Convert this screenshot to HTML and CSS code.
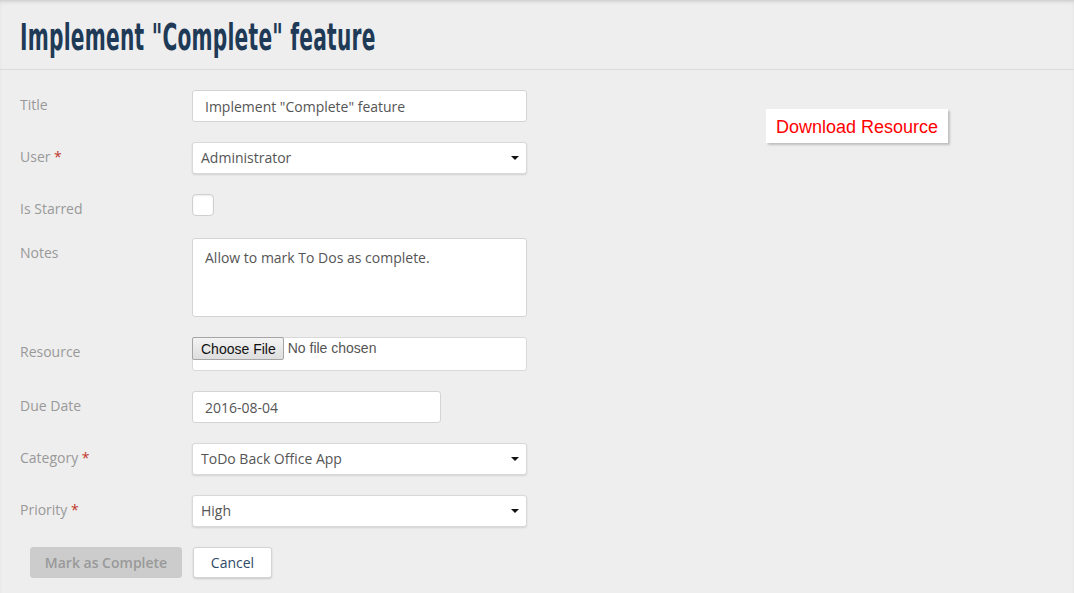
FILE: index.html
```html
<!DOCTYPE html>
<html lang="en">
<head>
<meta charset="utf-8">
<title>Implement "Complete" feature</title>
<link rel="stylesheet" href="styles.css">
</head>
<body>
<header class="header">
  <h1 class="title">Implement "Complete" feature</h1>
</header>
<main class="main">
  <form class="form">
    <div class="row">
      <label class="label">Title</label>
      <div class="input">Implement "Complete" feature</div>
    </div>
    <div class="row">
      <label class="label">User <span class="req">*</span></label>
      <div class="select"><span>Administrator</span><span class="caret"></span></div>
    </div>
    <div class="row">
      <label class="label">Is Starred</label>
      <div class="checkbox"></div>
    </div>
    <div class="row">
      <label class="label">Notes</label>
      <div class="textarea">Allow to mark To Dos as complete.</div>
    </div>
    <div class="row">
      <label class="label">Resource</label>
      <div class="file"><span class="file-btn">Choose File</span><span class="file-name">No file chosen</span></div>
    </div>
    <div class="row">
      <label class="label">Due Date</label>
      <div class="input input-date">2016-08-04</div>
    </div>
    <div class="row">
      <label class="label">Category <span class="req">*</span></label>
      <div class="select"><span>ToDo Back Office App</span><span class="caret"></span></div>
    </div>
    <div class="row">
      <label class="label">Priority <span class="req">*</span></label>
      <div class="select"><span>High</span><span class="caret"></span></div>
    </div>
    <div class="actions">
      <button type="button" class="btn btn-disabled">Mark as Complete</button>
      <button type="button" class="btn btn-cancel">Cancel</button>
    </div>
  </form>
  <aside class="aside">
    <a class="download">Download Resource</a>
  </aside>
</main>
</body>
</html>
```

FILE: styles.css
```css
* { box-sizing: border-box; }

html, body {
  margin: 0;
  padding: 0;
}

body {
  background: #eeeeee;
  font-family: "Open Sans", "Liberation Sans", sans-serif;
  font-size: 14px;
  color: #555;
  width: 1074px;
  height: 593px;
  overflow: hidden;
  box-shadow: inset 0 3px 4px -2px rgba(0, 0, 0, 0.18);
}

.header {
  height: 70px;
  border-bottom: 1px solid #dcdcdc;
  padding: 0 20px;
  display: flex;
  align-items: flex-start;
}

.title {
  margin: 15px 0 0 0;
  font-family: "DejaVu Sans Condensed", "Liberation Sans", sans-serif;
  font-weight: bold;
  font-size: 38px;
  line-height: 44px;
  color: #1e3a56;
  white-space: nowrap;
  transform: scaleX(0.59);
  transform-origin: left center;
  letter-spacing: 0.4px;
}

.main {
  display: flex;
  padding: 20px 0 0 20px;
}

.form {
  width: 507px;
  display: flex;
  flex-direction: column;
  gap: 20px;
}

.row {
  display: flex;
  align-items: flex-start;
}

.label {
  width: 172px;
  height: 24px;
  flex: none;
  padding-top: 5px;
  line-height: 20px;
  color: #999;
}

.req {
  color: #c0392b;
}

.input {
  width: 335px;
  height: 32px;
  background: #fff;
  border: 1px solid #d4d4d4;
  border-radius: 3px;
  padding: 1px 12px 0;
  line-height: 30px;
  color: #555;
}

.input-date {
  width: 249px;
}

.select {
  width: 335px;
  height: 32px;
  background: #fff;
  border: 1px solid #d9d9d9;
  border-radius: 3px;
  padding: 0 7px 2px 8px;
  display: flex;
  align-items: center;
  justify-content: space-between;
  color: #555;
  box-shadow: 0 1px 2px rgba(0, 0, 0, 0.12);
}

.caret {
  width: 0;
  height: 0;
  margin-top: 2px;
  border-left: 4px solid transparent;
  border-right: 4px solid transparent;
  border-top: 4px solid #111;
}

.checkbox {
  width: 22px;
  height: 22px;
  background: #fff;
  border: 1px solid #cfcfcf;
  border-radius: 4px;
  box-shadow: inset 0 1px 2px rgba(0, 0, 0, 0.08);
}

.textarea {
  width: 335px;
  height: 79px;
  background: #fff;
  border: 1px solid #d4d4d4;
  border-radius: 3px;
  padding: 9px 12px;
  line-height: 20px;
  color: #555;
}

.file {
  width: 335px;
  height: 34px;
  background: #fff;
  border: 1px solid #d9d9d9;
  border-radius: 3px;
  display: flex;
  align-items: flex-start;
  font-family: "Liberation Sans", Arial, sans-serif;
  font-size: 14px;
}

.file-btn {
  margin: -1px 0 0 -1px;
  height: 23px;
  line-height: 22px;
  padding: 0 7px 0 8px;
  border: 1px solid #a5a5a5;
  border-radius: 2px;
  background: linear-gradient(#f3f3f3, #dedede);
  color: #111;
}

.file-name {
  margin-left: 4px;
  line-height: 21px;
  color: #555;
}

.actions {
  display: flex;
  gap: 11px;
  padding-left: 10px;
}

.btn {
  height: 31px;
  font-family: "Open Sans", "Liberation Sans", sans-serif;
  font-size: 14px;
  border-radius: 3px;
  padding: 0 12px;
  cursor: default;
}

.btn-disabled {
  width: 152px;
  background: #cccccc;
  border: 1px solid #cccccc;
  color: #999;
  font-weight: 600;
}

.btn-cancel {
  width: 79px;
  background: #fff;
  border: 1px solid #d4d4d4;
  color: #2f4a66;
  box-shadow: 0 1px 2px rgba(0, 0, 0, 0.15);
}

.aside {
  margin-left: 239px;
  padding-top: 19px;
}

.download {
  display: inline-block;
  height: 34px;
  width: 182px;
  line-height: 36px;
  padding-left: 10px;
  background: #fff;
  font-family: "Liberation Sans", Arial, sans-serif;
  font-size: 18px;
  color: #ff0000;
  box-shadow: 2px 2px 2px rgba(0, 0, 0, 0.2);
  white-space: nowrap;
}
```
